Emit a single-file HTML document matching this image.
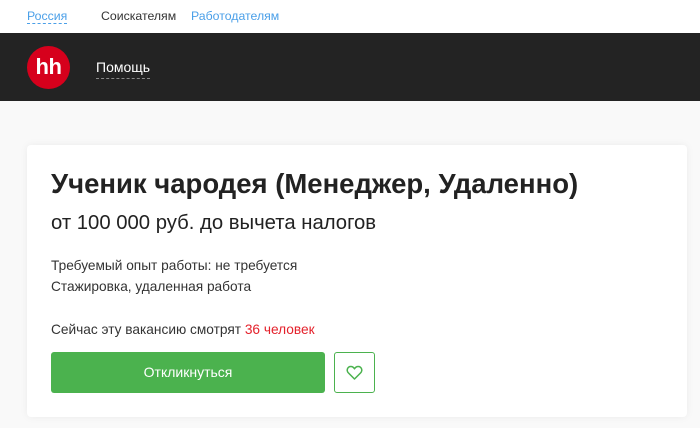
<!DOCTYPE html>
<html><head><meta charset="utf-8"><style>
body{margin:0;width:700px;height:428px;background:#f9f9f9;font-family:"Liberation Sans",Arial,sans-serif;overflow:hidden;position:relative}
.top{position:absolute;left:0;top:0;width:700px;height:33px;background:#fff;font-size:12.3px}
.top span{position:absolute;top:9px}
.dark{position:absolute;left:0;top:33px;width:700px;height:68px;background:#232323}
.logo{position:absolute;left:27px;top:46px;width:43px;height:43px;border-radius:50%;background:#d6001c;color:#fff;font-weight:bold;font-size:22px;text-align:center;line-height:42px;letter-spacing:-0.5px}
.help{position:absolute;left:96px;top:59px;color:#fff;font-size:14px;border-bottom:1px dashed #888;padding-bottom:3px}
.card{position:absolute;left:27px;top:145px;width:660px;height:272px;background:#fff;border-radius:4px;box-shadow:0 0 8px rgba(0,0,0,0.06)}
h1{position:absolute;left:24px;top:23px;margin:0;font-size:27.5px;font-weight:bold;color:#222;white-space:nowrap}
.sal{position:absolute;left:24px;top:67px;font-size:20.3px;color:#222;white-space:nowrap}
.t{position:absolute;left:24px;font-size:13.7px;color:#333;white-space:nowrap}
.btn{position:absolute;left:24px;top:207px;width:274px;height:41px;background:#4bb24e;border-radius:3px;color:#fff;font-size:14px;text-align:center;line-height:41px}
.fav{position:absolute;left:307px;top:207px;width:39px;height:39px;border:1px solid #4bb24e;border-radius:3px}
</style></head><body>
<div class="top">
<span style="left:27px;color:#4a9fe8;border-bottom:1px dashed #4a9fe8">Россия</span>
<span style="left:101px;color:#333">Соискателям</span>
<span style="left:191px;color:#4a9fe8">Работодателям</span>
</div>
<div class="dark"></div>
<div class="logo">hh</div>
<div class="help">Помощь</div>
<div class="card">
<h1>Ученик чародея (Менеджер, Удаленно)</h1>
<div class="sal">от 100 000 руб. до вычета налогов</div>
<div class="t" style="top:113px">Требуемый опыт работы: не требуется</div>
<div class="t" style="top:134px">Стажировка, удаленная работа</div>
<div class="t" style="top:177px">Сейчас эту вакансию смотрят <span style="color:#e4212b">36 человек</span></div>
<div class="btn">Откликнуться</div>
<div class="fav"><svg width="39" height="39" viewBox="0 0 39 39"><path d="M19.5 26 L13.5 20 C11 17.5 12.5 13.5 15.8 13.5 C17.5 13.5 18.8 14.6 19.5 15.8 C20.2 14.6 21.5 13.5 23.2 13.5 C26.5 13.5 28 17.5 25.5 20 Z" fill="none" stroke="#4bb24e" stroke-width="1.5" stroke-linejoin="round"/></svg></div>
</div>
</body></html>
